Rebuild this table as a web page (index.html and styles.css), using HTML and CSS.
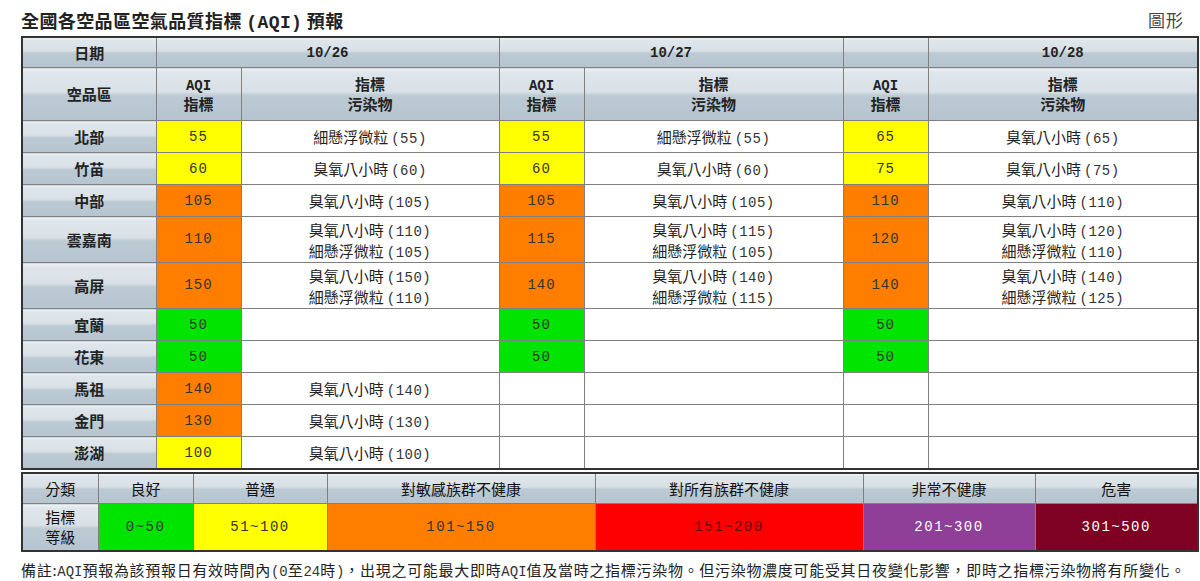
FILE: index.html
```html
<!DOCTYPE html>
<html lang="zh-Hant">
<head>
<meta charset="utf-8">
<title>全國各空品區空氣品質指標 (AQI) 預報</title>
<link rel="stylesheet" href="styles.css">
</head>
<body>
<div class="page">
  <div class="titlebar">
    <h1 class="title">全國各空品區空氣品質指標 <span class="mono">(AQI)</span> 預報</h1>
    <a class="chart-link">圖形</a>
  </div>

  <table class="forecast">
    <colgroup>
      <col class="c-area"><col class="c-aqi"><col class="c-pol1"><col class="c-aqi"><col class="c-pol2"><col class="c-aqi"><col class="c-pol3">
    </colgroup>
    <tr class="r-date">
      <th class="hd">日期</th>
      <th class="hd mono" colspan="2">10/26</th>
      <th class="hd mono" colspan="2">10/27</th>
      <th class="hd"></th>
      <th class="hd mono">10/28</th>
    </tr>
    <tr class="r-head">
      <th class="hd">空品區</th>
      <th class="hd"><span class="mono">AQI</span><br>指標</th>
      <th class="hd">指標<br>污染物</th>
      <th class="hd"><span class="mono">AQI</span><br>指標</th>
      <th class="hd">指標<br>污染物</th>
      <th class="hd"><span class="mono">AQI</span><br>指標</th>
      <th class="hd">指標<br>污染物</th>
    </tr>
    <tr class="r1">
      <th class="area">北部</th>
      <td class="num yellow">55</td><td class="pol">細懸浮微粒<span class="n">(55)</span></td>
      <td class="num yellow">55</td><td class="pol">細懸浮微粒<span class="n">(55)</span></td>
      <td class="num yellow">65</td><td class="pol">臭氧八小時<span class="n">(65)</span></td>
    </tr>
    <tr class="r1">
      <th class="area">竹苗</th>
      <td class="num yellow">60</td><td class="pol">臭氧八小時<span class="n">(60)</span></td>
      <td class="num yellow">60</td><td class="pol">臭氧八小時<span class="n">(60)</span></td>
      <td class="num yellow">75</td><td class="pol">臭氧八小時<span class="n">(75)</span></td>
    </tr>
    <tr class="r1">
      <th class="area">中部</th>
      <td class="num orange">105</td><td class="pol">臭氧八小時<span class="n">(105)</span></td>
      <td class="num orange">105</td><td class="pol">臭氧八小時<span class="n">(105)</span></td>
      <td class="num orange">110</td><td class="pol">臭氧八小時<span class="n">(110)</span></td>
    </tr>
    <tr class="r2">
      <th class="area">雲嘉南</th>
      <td class="num orange">110</td><td class="pol">臭氧八小時<span class="n">(110)</span><br>細懸浮微粒<span class="n">(105)</span></td>
      <td class="num orange">115</td><td class="pol">臭氧八小時<span class="n">(115)</span><br>細懸浮微粒<span class="n">(105)</span></td>
      <td class="num orange">120</td><td class="pol">臭氧八小時<span class="n">(120)</span><br>細懸浮微粒<span class="n">(110)</span></td>
    </tr>
    <tr class="r2">
      <th class="area">高屏</th>
      <td class="num orange">150</td><td class="pol">臭氧八小時<span class="n">(150)</span><br>細懸浮微粒<span class="n">(110)</span></td>
      <td class="num orange">140</td><td class="pol">臭氧八小時<span class="n">(140)</span><br>細懸浮微粒<span class="n">(115)</span></td>
      <td class="num orange">140</td><td class="pol">臭氧八小時<span class="n">(140)</span><br>細懸浮微粒<span class="n">(125)</span></td>
    </tr>
    <tr class="r1">
      <th class="area">宜蘭</th>
      <td class="num green">50</td><td class="pol"></td>
      <td class="num green">50</td><td class="pol"></td>
      <td class="num green">50</td><td class="pol"></td>
    </tr>
    <tr class="r1">
      <th class="area">花東</th>
      <td class="num green">50</td><td class="pol"></td>
      <td class="num green">50</td><td class="pol"></td>
      <td class="num green">50</td><td class="pol"></td>
    </tr>
    <tr class="r1">
      <th class="area">馬祖</th>
      <td class="num orange">140</td><td class="pol">臭氧八小時<span class="n">(140)</span></td>
      <td class="num"></td><td class="pol"></td>
      <td class="num"></td><td class="pol"></td>
    </tr>
    <tr class="r1">
      <th class="area">金門</th>
      <td class="num orange">130</td><td class="pol">臭氧八小時<span class="n">(130)</span></td>
      <td class="num"></td><td class="pol"></td>
      <td class="num"></td><td class="pol"></td>
    </tr>
    <tr class="r1">
      <th class="area">澎湖</th>
      <td class="num yellow">100</td><td class="pol">臭氧八小時<span class="n">(100)</span></td>
      <td class="num"></td><td class="pol"></td>
      <td class="num"></td><td class="pol"></td>
    </tr>
  </table>

  <table class="legend">
    <colgroup>
      <col class="l0"><col class="l1"><col class="l2"><col class="l3"><col class="l4"><col class="l5"><col class="l6">
    </colgroup>
    <tr class="lr1">
      <th class="hd">分類</th>
      <th class="hd">良好</th>
      <th class="hd">普通</th>
      <th class="hd">對敏感族群不健康</th>
      <th class="hd">對所有族群不健康</th>
      <th class="hd">非常不健康</th>
      <th class="hd">危害</th>
    </tr>
    <tr class="lr2">
      <th class="hd">指標<br>等級</th>
      <td class="num green">0~50</td>
      <td class="num yellow">51~100</td>
      <td class="num orange">101~150</td>
      <td class="num red">151~200</td>
      <td class="num purple">201~300</td>
      <td class="num maroon">301~500</td>
    </tr>
  </table>

  <p class="note">備註:<span class="n">AQI</span>預報為該預報日有效時間內<span class="n">(0</span>至<span class="n">24</span>時<span class="n">)</span>，出現之可能最大即時<span class="n">AQI</span>值及當時之指標污染物。但污染物濃度可能受其日夜變化影響，即時之指標污染物將有所變化。</p>
</div>
</body>
</html>
```

FILE: styles.css
```css
html, body {
  margin: 0;
  padding: 0;
  background: #ffffff;
}

body {
  font-family: "Noto Sans CJK TC", "Noto Sans CJK SC", sans-serif;
  color: #222;
}

.page {
  width: 1176px;
  padding: 0 3px 0 21px;
}

.titlebar {
  display: flex;
  justify-content: space-between;
  align-items: center;
  height: 36px;
  padding-top: 3px;
  box-sizing: border-box;
}

.title {
  margin: 0;
  font-size: 18px;
  line-height: 24px;
  font-weight: bold;
  color: #222;
  letter-spacing: 0.4px;
}

.title .mono {
  font-family: "Liberation Mono", monospace;
  font-weight: bold;
  font-size: 18px;
  line-height: 1;
}

.chart-link {
  font-size: 17px;
  line-height: 24px;
  color: #444;
  margin-right: 13px;
  letter-spacing: 1px;
}

table {
  border-collapse: collapse;
  table-layout: fixed;
  width: 1176px;
  border: 2px solid #333;
}

th, td {
  border: 1px solid #808080;
  padding: 0;
  text-align: center;
  vertical-align: middle;
  font-size: 15px;
  line-height: 20px;
  font-weight: normal;
}

.c-area { width: 134px; }
.c-aqi { width: 85px; }
.c-pol1 { width: 258px; }
.c-pol2 { width: 259px; }
.c-pol3 { width: 270px; }

.hd, .area {
  background: linear-gradient(to bottom, #eef2f5 0%, #dfe6eb 8%, #d8e0e6 45%, #bccad4 52%, #b5c4cf 100%);
  color: #222;
}

.hd {
  font-weight: bold;
}

.hd.mono, .hd .mono {
  font-family: "Liberation Mono", monospace;
  font-weight: bold;
  font-size: 14px;
  line-height: 1;
}

.hd.mono {
  line-height: 20px;
}

.area {
  font-weight: bold;
}

.r-date th { height: 29px; }
.r-head th { height: 52px; }
.r1 th, .r1 td { height: 31px; }
.r2 th, .r2 td { height: 45px; line-height: 21px; }

.num {
  font-family: "Liberation Mono", monospace;
  font-size: 14px;
  color: #333;
  letter-spacing: 1px;
}

.pol {
  color: #222;
  background: #fff;
}

.n {
  font-family: "Liberation Mono", monospace;
  font-size: 14px;
  line-height: 1;
  color: #333;
  letter-spacing: 0.5px;
  margin-left: 3px;
}

.yellow { background: #ffff00; }
.orange { background: #ff7e00; }
.green { background: #00e400; }
.red { background: #ff0000; color: #6a0000; }
.purple { background: #8f3f97; color: #fff; }
.maroon { background: #7e0023; color: #fff; }

.legend {
  margin-top: 2px;
}

.l0 { width: 76px; }
.l1 { width: 95px; }
.l2 { width: 134px; }
.l3 { width: 268px; }
.l4 { width: 268px; }
.l5 { width: 172px; }
.l6 { width: 163px; }

.lr1 th { height: 29px; }
.lr2 th, .lr2 td { height: 46px; }

.legend .hd {
  font-weight: normal;
  color: #111;
}

.legend .num {
  font-size: 14px;
  letter-spacing: 1.5px;
}

.note {
  margin: 8px 0 0 0;
  font-size: 15px;
  line-height: 20px;
  color: #222;
  letter-spacing: 0.7px;
  white-space: nowrap;
}

.note .n {
  margin-left: 0;
  letter-spacing: 0;
}
```
